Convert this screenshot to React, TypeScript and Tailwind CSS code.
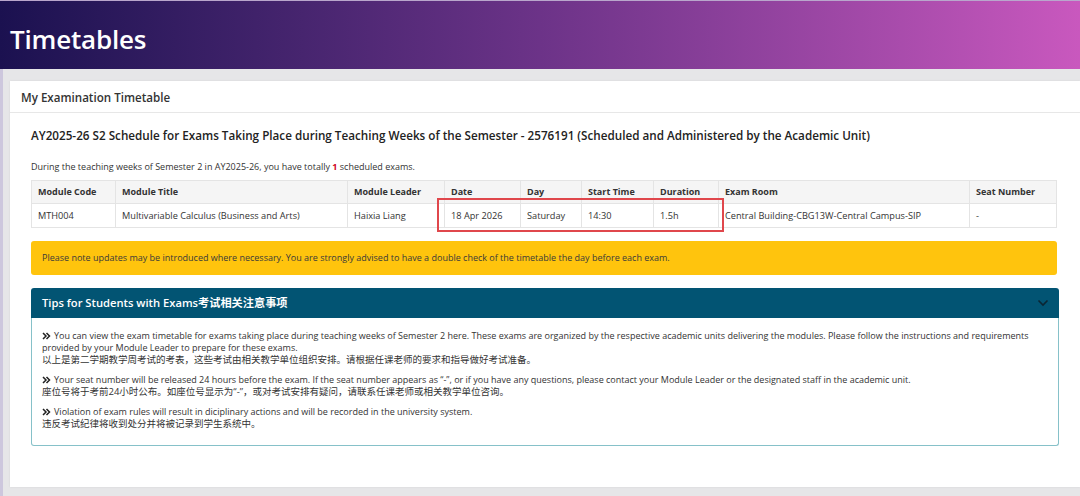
import React from 'react';

const columns = [
  { label: 'Module Code', w: 'w-[84px]' },
  { label: 'Module Title', w: 'w-[232px]' },
  { label: 'Module Leader', w: 'w-[97px]' },
  { label: 'Date', w: 'w-[76px]' },
  { label: 'Day', w: 'w-[61px]' },
  { label: 'Start Time', w: 'w-[72px]' },
  { label: 'Duration', w: 'w-[65px]' },
  { label: 'Exam Room', w: 'w-[251px]' },
  { label: 'Seat Number', w: '' },
];

const row = [
  'MTH004',
  'Multivariable Calculus (Business and Arts)',
  'Haixia Liang',
  '18 Apr 2026',
  'Saturday',
  '14:30',
  '1.5h',
  'Central Building-CBG13W-Central Campus-SIP',
  '-',
];

const cjk = "font-['Open_Sans','Noto_Sans_CJK_SC',sans-serif]";

// bold double chevron used as bullet
const Chevrons = () => (
  <svg width="9" height="8" viewBox="0 0 9 8" className="inline-block align-[-0.5px] mr-[3px]" fill="none">
    <path d="M1 1 L4 4 L1 7 M4.5 1 L7.5 4 L4.5 7" stroke="#222" strokeWidth="1.5" />
  </svg>
);

const Tip = ({ en, zh }: { en: React.ReactNode; zh: string }) => (
  <div className="mb-[8px]">
    <p className="leading-[12px] text-[9px]">
      <Chevrons />
      {en}
    </p>
    <p className="leading-[12px] text-[9.5px]">{zh}</p>
  </div>
);

export default function App() {
  return (
    <div className={`min-h-[496px] bg-[#e6e6e8] text-[#333] ${cjk} overflow-hidden`}>
      <div className="h-[69px] border-t border-[#b9a6cc] bg-gradient-to-r from-[#1b1150] via-[#6c3388] to-[#c958be] flex items-center pl-[10px] pt-[8px]">
        <h1 className="text-white font-semibold text-[26px] tracking-[-0.2px] leading-none">Timetables</h1>
      </div>

      <div className="flex">
        <div className="w-[4px] bg-[#cdc7dd] self-stretch" />
        <div className="flex-1 pl-[7px] pt-[12px] pb-[9px]">
          <div className="bg-white h-[406px] shadow-[0_0_2px_rgba(0,0,0,0.08)]">
            <div className="h-[32px] border-b border-[#e7e7e7] flex items-center pl-[11px] pt-[3px]">
              <h2 className="text-[11.6px] font-semibold text-[#333]">My Examination Timetable</h2>
            </div>

            <div className="pl-[21px] pr-[21px]">
              <h3 className="text-[11.7px] font-semibold text-[#222] mt-[12px] leading-[20px]">
                AY2025-26 S2 Schedule for Exams Taking Place during Teaching Weeks of the Semester - 2576191 (Scheduled and Administered by the Academic Unit)
              </h3>

              <p className="text-[9px] mt-[16px] leading-[12px]">
                During the teaching weeks of Semester 2 in AY2025-26, you have totally <span className="text-[#d0021b] font-bold">1</span> scheduled exams.
              </p>

              <div className="relative mt-[7px]">
                <table className="w-[1026px] border-collapse text-[9.2px] table-fixed">
                  <thead>
                    <tr className="bg-[#f5f5f5] h-[23px]">
                      {columns.map((c) => (
                        <th key={c.label} className={`${c.w} border border-[#e4e4e4] text-left font-bold px-[6px] text-[#333] text-[9px]`}>
                          {c.label}
                        </th>
                      ))}
                    </tr>
                  </thead>
                  <tbody>
                    <tr className="h-[24px]">
                      {row.map((v, i) => (
                        <td key={i} className="border border-[#e4e4e4] px-[6px] font-normal">
                          {v}
                        </td>
                      ))}
                    </tr>
                  </tbody>
                </table>
                {/* highlight annotation */}
                <div className="absolute left-[406px] top-[18px] w-[287px] h-[34px] border-2 border-[#e0474c] pointer-events-none" />
              </div>

              <div className="mt-[13px] w-[1026px] h-[34px] bg-[#ffc40d] rounded-[3px] flex items-center pl-[11px] text-[9px] text-[#3a3a3a]">
                Please note updates may be introduced where necessary. You are strongly advised to have a double check of the timetable the day before each exam.
              </div>

              <div className="mt-[13px] w-[1028px]">
                <div className="h-[30px] bg-[#025473] rounded-t-[3px] flex items-center justify-between pl-[11px] pr-[10px]">
                  <span className="text-white font-semibold text-[11.2px]">Tips for Students with Exams考试相关注意事项</span>
                  <svg width="12" height="8" viewBox="0 0 12 8" fill="none">
                    <path d="M1.5 1.5 L6 6 L10.5 1.5" stroke="#0b2533" strokeWidth="1.6" />
                  </svg>
                </div>
                <div className="h-[128px] border border-t-0 border-[#86c1c9] rounded-b-[3px] pl-[10px] pr-[8px] pt-[12px] text-[#333]">
                  <Tip
                    en={
                      <>
                        You can view the exam timetable for exams taking place during teaching weeks of Semester 2 here. These exams are organized by the respective academic units delivering the modules. Please follow the instructions and requirements
                        <br />
                        provided by your Module Leader to prepare for these exams.
                      </>
                    }
                    zh="以上是第二学期教学周考试的考表，这些考试由相关教学单位组织安排。请根据任课老师的要求和指导做好考试准备。"
                  />
                  <Tip
                    en={'Your seat number will be released 24 hours before the exam. If the seat number appears as “-”, or if you have any questions, please contact your Module Leader or the designated staff in the academic unit.'}
                    zh="座位号将于考前24小时公布。如座位号显示为“-”，或对考试安排有疑问，请联系任课老师或相关教学单位咨询。"
                  />
                  <Tip
                    en="Violation of exam rules will result in diciplinary actions and will be recorded in the university system."
                    zh="违反考试纪律将收到处分并将被记录到学生系统中。"
                  />
                </div>
              </div>
            </div>
          </div>
        </div>
      </div>
    </div>
  );
}
